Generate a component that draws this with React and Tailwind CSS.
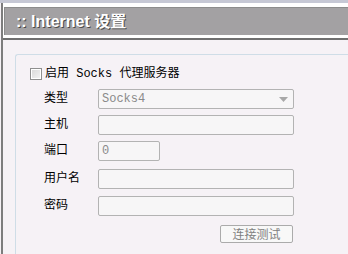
import React from "react";

const fieldCls =
  "h-[20px] rounded-[2px] border border-[#b3b3b3] bg-[#f7f6f7] px-[3px] text-[12px] leading-[18px] text-[#8a8a8a]";

const Row = ({ label, className, children }) => (
  <div className={"flex items-center " + className}>
    <span className="w-[55px] pl-[1px] text-[12px] text-black">{label}</span>
    {children}
  </div>
);

export default function App() {
  return (
    <div
      className="w-[348px] h-[254px] overflow-hidden bg-[#f6f2f6]"
      style={{ fontFamily: '"Liberation Mono", "Noto Sans CJK SC", monospace' }}
    >
      <div className="h-[3px] bg-[#c6c8d5]" />
      <div className="ml-px flex h-[251px] flex-col border-l-2 border-[#7d7d7d]">
        {/* header */}
        <div className="bg-white pl-px pt-[4px] pb-[3px]">
          <div className="flex h-[28px] items-center border-l border-t border-[#8c8c8c] bg-[#a3a1a3] pl-[11px]">
            <span
              className="text-[16px] font-bold text-white"
              style={{
                fontFamily: '"Liberation Sans", "Noto Sans CJK SC", sans-serif',
                textShadow: "1px 1px 0 #4a4a4a",
              }}
            >
              :: Internet 设置
            </span>
          </div>
        </div>
        <div className="h-[2px] bg-[#6f6f6f]" />

        {/* content */}
        <div className="flex-1 pl-[12px] pt-[14px]">
          <div className="h-full rounded-tl-[3px] border-l border-t border-[#cfdde7] pl-[14px] pt-[13px]">
            <label className="flex h-[12px] items-center gap-[3px] text-[12px] text-black">
              <span className="h-[12px] w-[12px] border border-[#8f8f8f] bg-gradient-to-br from-[#d8d8d8] to-[#f4f4f4] shadow-[inset_0_0_0_1px_#ffffff]" />
              <span>启用 Socks 代理服务器</span>
            </label>

            <div className="pl-[13px]">
              <Row label="类型" className="mt-[9px]">
                <div className={fieldCls + " flex w-[196px] items-center justify-between"}>
                  <span>Socks4</span>
                  <svg width="9" height="5" viewBox="0 0 9 5" className="mr-[2px]">
                    <path d="M0 0h9L4.5 5z" fill="#a8a8a8" />
                  </svg>
                </div>
              </Row>
              <Row label="主机" className="mt-[6px]">
                <div className={fieldCls + " w-[196px]"} />
              </Row>
              <Row label="端口" className="mt-[6px]">
                <div className={fieldCls + " w-[62px]"}>0</div>
              </Row>
              <Row label="用户名" className="mt-[8px]">
                <div className={fieldCls + " w-[196px]"} />
              </Row>
              <Row label="密码" className="mt-[7px]">
                <div className={fieldCls + " w-[196px]"} />
              </Row>
              <div className="mt-[9px] flex w-[250px] justify-end">
                <button
                  className="h-[18px] w-[73px] rounded-[2px] border border-[#ababab] bg-[#f8f8f8] text-[12px] leading-[16px] text-[#808080]"
                  style={{ fontFamily: '"Noto Sans CJK SC", sans-serif' }}
                >
                  连接测试
                </button>
              </div>
            </div>
          </div>
        </div>
      </div>
    </div>
  );
}
